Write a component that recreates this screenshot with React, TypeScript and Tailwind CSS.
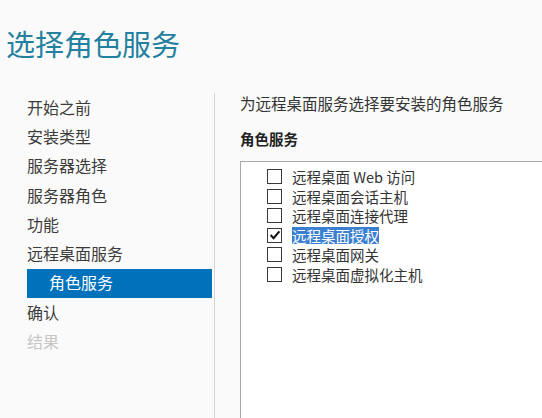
import React from 'react';

const steps = [
  { label: '开始之前' },
  { label: '安装类型' },
  { label: '服务器选择' },
  { label: '服务器角色' },
  { label: '功能' },
  { label: '远程桌面服务' },
  { label: '角色服务', sub: true, active: true },
  { label: '确认' },
  { label: '结果', disabled: true },
];

const services = [
  { label: '远程桌面 Web 访问', checked: false },
  { label: '远程桌面会话主机', checked: false },
  { label: '远程桌面连接代理', checked: false },
  { label: '远程桌面授权', checked: true },
  { label: '远程桌面网关', checked: false },
  { label: '远程桌面虚拟化主机', checked: false },
];

const Checkbox: React.FC<{ checked: boolean }> = ({ checked }) => (
  <span className="w-[15px] h-[15px] shrink-0 border border-[#3a3a3a] bg-white flex items-center justify-center">
    {checked && (
      <svg width="12" height="12" viewBox="0 0 12 12">
        <path d="M1.6 6 L4.6 9.2 L10.4 2.4" fill="none" stroke="#111" strokeWidth="2" />
      </svg>
    )}
  </span>
);

export default function App() {
  return (
    <div
      className="w-[542px] h-[418px] bg-[#fafafa] overflow-hidden text-[#333]"
      style={{ fontFamily: '"Noto Sans CJK SC", "Noto Sans", sans-serif' }}
    >
      <h1 className="pt-[26px] pl-[6px] h-[94px] text-[29px] leading-[35px] font-normal text-[#23809f]">
        选择角色服务
      </h1>
      <div className="flex h-[324px]">
        <nav className="w-[215px] shrink-0 border-r border-[#d6d6d6] pl-[27px] pr-[2px] -mt-[1px]">
          {steps.map(s => (
            <div
              key={s.label}
              className={
                'h-[29.3px] flex items-center text-[16px] pb-[2px] ' +
                (s.active
                  ? 'bg-[#0072bc] text-white pl-[22px]'
                  : s.disabled
                  ? 'text-[#c6c6c6]'
                  : 'text-[#3c3c3c]')
              }
            >
              {s.label}
            </div>
          ))}
        </nav>
        <div className="pl-[25px] flex-1 min-w-0">
          <p className="text-[15.5px] leading-[20px] text-[#333] -mt-[1px]">为远程桌面服务选择要安装的角色服务</p>
          <h2 className="mt-[16px] text-[14.5px] leading-[20px] font-bold text-[#222]">角色服务</h2>
          <div className="mt-[12px] w-[340px] h-[280px] border border-[#a9a9a9] bg-white pt-[5px] pl-[26px]">
            {services.map(s => (
              <div key={s.label} className="h-[19.5px] flex items-center gap-[10px]">
                <Checkbox checked={s.checked} />
                <span
                  className={
                    'text-[14.5px] leading-[17px] whitespace-nowrap ' +
                    (s.checked ? 'bg-[#3b80d0] text-white' : 'text-[#333]')
                  }
                >
                  {s.label}
                </span>
              </div>
            ))}
          </div>
        </div>
      </div>
    </div>
  );
}
